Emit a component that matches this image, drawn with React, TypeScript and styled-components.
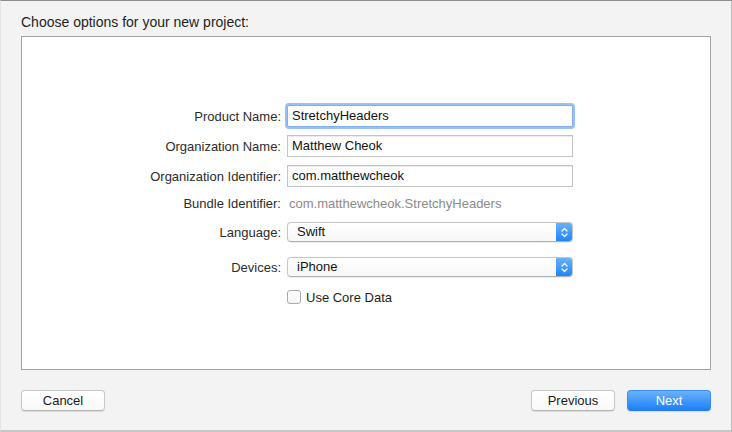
import React from 'react';
import styled, { createGlobalStyle } from 'styled-components';

const GlobalStyle = createGlobalStyle`
  html, body {
    margin: 0;
    padding: 0;
    background: #f3f3f3;
  }
  body {
    font-family: "Liberation Sans", Arial, sans-serif;
    font-size: 13px;
    color: #262626;
  }
`;

const Sheet = styled.div`
  width: 732px;
  height: 432px;
  box-sizing: border-box;
  background: #f3f3f3;
  border-top: 1px solid #8c8c8c;
  border-left: 1px solid #e4e4e4;
  border-right: 1px solid #b8b8b8;
  border-bottom: 2px solid #c6c6c6;
  display: flex;
  flex-direction: column;
  padding: 0 20px 0 20px;
`;

const Heading = styled.div`
  height: 35px;
  font-size: 14px;
  line-height: 14px;
  padding-top: 14px;
  box-sizing: border-box;
  color: #1e1e1e;
`;

const ContentBox = styled.div`
  height: 334px;
  box-sizing: border-box;
  background: #ffffff;
  border: 1px solid #a2a2a2;
  padding-top: 64px;
`;

const Form = styled.div`
  display: grid;
  grid-template-columns: 259px 286px;
  grid-template-rows: 30px 30px 30px 24px 34px 36px 24px;
  column-gap: 6px;
  align-items: center;
`;

const Label = styled.div`
  text-align: right;
  color: #2c2c2c;
  white-space: nowrap;
`;

const TextField = styled.div<{ focused?: boolean }>`
  height: 22px;
  box-sizing: border-box;
  border: 1px solid ${p => (p.focused ? '#7fb0ec' : '#c3c3c3')};
  box-shadow: ${p => (p.focused ? '0 0 0 2px rgba(120, 172, 240, 0.75)' : 'inset 0 1px 0 #ececec')};
  background: #fff;
  padding: 0 4px;
  line-height: 20px;
  color: #111;
  border-radius: ${p => (p.focused ? '2px' : '0')};
`;

const Plain = styled.div`
  color: #8a8a8a;
  padding-left: 2px;
`;

const Popup = styled.div`
  height: 20px;
  box-sizing: border-box;
  display: flex;
  border: 1px solid #c6c6c6;
  border-bottom-color: #b0b0b0;
  border-radius: 4px;
  background: linear-gradient(#ffffff, #f7f7f7);
  box-shadow: 0 0.5px 1px rgba(0, 0, 0, 0.08);
  overflow: hidden;
`;

const PopupText = styled.div`
  flex: 1;
  padding-left: 9px;
  line-height: 18px;
  color: #111;
`;

const Stepper = styled.div`
  width: 17px;
  margin: -1px -1px -1px 0;
  background: linear-gradient(#6cb4fb, #1a84fb);
  border-radius: 0 4px 4px 0;
  display: flex;
  align-items: center;
  justify-content: center;
`;

const CheckRow = styled.label`
  display: flex;
  align-items: center;
  gap: 5px;
  color: #1e1e1e;
`;

const Box = styled.span`
  width: 14px;
  height: 14px;
  box-sizing: border-box;
  border: 1px solid #aaaaaa;
  border-radius: 3px;
  background: linear-gradient(#ffffff, #f4f4f4);
`;

const Footer = styled.div`
  flex: 1;
  display: flex;
  align-items: center;
  padding-top: 1px;
  gap: 12px;
`;

const Spacer = styled.div`
  flex: 1;
`;

const Button = styled.button<{ primary?: boolean }>`
  width: 84px;
  height: 21px;
  box-sizing: border-box;
  font-family: inherit;
  font-size: 13px;
  padding: 0;
  border-radius: 4px;
  border: 1px solid ${p => (p.primary ? '#3a8df4' : '#c8c8c8')};
  border-bottom-color: ${p => (p.primary ? '#2b7ae8' : '#b4b4b4')};
  background: ${p => (p.primary ? 'linear-gradient(#6ab2fb, #1c80f8)' : 'linear-gradient(#ffffff, #f9f9f9)')};
  color: ${p => (p.primary ? '#ffffff' : '#1a1a1a')};
  box-shadow: 0 0.5px 1px rgba(0, 0, 0, 0.1);
`;

const Chevrons = () => (
  <svg width="9" height="13" viewBox="0 0 9 13">
    <path d="M2 5 L4.5 2.5 L7 5 M2 8 L4.5 10.5 L7 8" fill="none" stroke="#fff" strokeWidth="1.3" strokeLinecap="round" strokeLinejoin="round" />
  </svg>
);

const App: React.FC = () => (
  <>
    <GlobalStyle />
    <Sheet>
      <Heading>Choose options for your new project:</Heading>
      <ContentBox>
        <Form>
          <Label>Product Name:</Label>
          <TextField focused>StretchyHeaders</TextField>
          <Label>Organization Name:</Label>
          <TextField>Matthew Cheok</TextField>
          <Label>Organization Identifier:</Label>
          <TextField>com.matthewcheok</TextField>
          <Label>Bundle Identifier:</Label>
          <Plain>com.matthewcheok.StretchyHeaders</Plain>
          <Label>Language:</Label>
          <Popup>
            <PopupText>Swift</PopupText>
            <Stepper><Chevrons /></Stepper>
          </Popup>
          <Label>Devices:</Label>
          <Popup>
            <PopupText>iPhone</PopupText>
            <Stepper><Chevrons /></Stepper>
          </Popup>
          <span />
          <CheckRow>
            <Box />
            Use Core Data
          </CheckRow>
        </Form>
      </ContentBox>
      <Footer>
        <Button>Cancel</Button>
        <Spacer />
        <Button>Previous</Button>
        <Button primary>Next</Button>
      </Footer>
    </Sheet>
  </>
);

export default App;
